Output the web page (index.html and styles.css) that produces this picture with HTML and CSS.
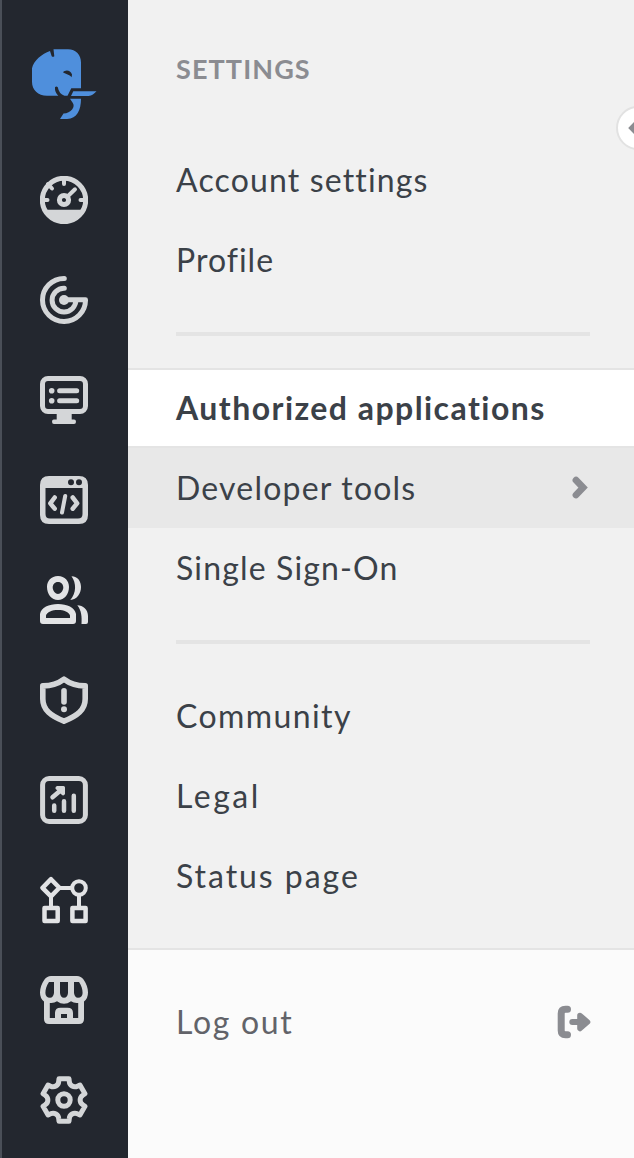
FILE: index.html
```html
<!DOCTYPE html>
<html lang="en">
<head>
<meta charset="utf-8">
<title>Settings</title>
<link rel="stylesheet" href="styles.css">
</head>
<body>
<div class="app">
  <nav class="rail">
    <svg class="logo" viewBox="0 0 68 72">
      <path fill="#4f8fdc" fill-rule="evenodd" d="M23.5 1.3H38C46 1.3 51 7 51 14.5V40.3H41.3L37.5 47.7H34.5Q29 46 27.8 39.2Q26.3 37.8 25 39.2Q24.6 44 28.3 47.7H17C8 47.7 2 42 2 33.7V20.3C3.5 13 12 5.500 20 3L21.700 8.300Q23 9.300 24.300 8.300ZM33 24.300C35 21.500 40.500 21.500 42 26.500L41.600 29.300C39.500 26.500 36 26.500 33 24.300ZM43.300 43.300H66.500C64 46 62 47.700 58.500 48H41ZM40 50.700H51C51 62 47 71 37 70.900H30L33.500 65.600C41 65 46 59 42.500 54.500Z"/>
    </svg>
    <svg class="icon" viewBox="0 0 48 48">
      <circle cx="24" cy="24" r="21.700" class="s5"/>
      <path class="f" d="M2.500 33.700H45.500C41 43 33 47 24 47S7 43 2.500 33.700Z"/>
      <path class="s4" d="M24 2V8M2 24H7.500M46 24H40.500M8 8L12 12.500M27 21L35 13.300"/>
      <circle cx="24" cy="24" r="4.600" class="s5"/>
    </svg>
    <svg class="icon" viewBox="0 0 48 48">
      <path class="s5" d="M24.300 2.500H24A21.500 21.500 0 1 0 45.500 23.700H24M24.300 12.200H24A11.900 11.900 0 1 0 35.900 24"/>
      <circle cx="24" cy="24" r="5" class="f"/>
    </svg>
    <svg class="icon" viewBox="0 0 48 48">
      <rect x="2.500" y="2.500" width="43" height="33" rx="5.500" class="s5"/>
      <path class="f" d="M16.700 37H31.700V43.500H34Q36 43.500 36 45.700T34 48H14Q12 48 12 45.700T14 43.500H16.700Z"/>
      <circle cx="11.700" cy="14.700" r="2.800" class="f"/><circle cx="11.700" cy="24.700" r="2.800" class="f"/>
      <path class="s5" d="M19.600 14.700H36.700M19.600 24.700H36.700"/>
    </svg>
    <svg class="icon" viewBox="0 0 48 48">
      <path class="f" fill-rule="evenodd" d="M9 0H39Q48 0 48 9V39Q48 48 39 48H9Q0 48 0 39V9Q0 0 9 0ZM5.500 12V38Q5.500 42.600 10 42.600H38Q42.500 42.600 42.500 38V12ZM28 6.300a3 3 0 1 0 6 0a3 3 0 1 0-6 0ZM36 6.300a3 3 0 1 0 6 0a3 3 0 1 0-6 0Z"/>
      <path class="s45" d="M14.700 21.500L10.300 27.300L14.700 32.700M32.700 21.500L37.200 27.300L32.700 32.700"/>
      <path class="s4" d="M25.200 20L22 36.500"/>
    </svg>
    <svg class="icon bright" viewBox="0 0 48 48">
      <path class="f" fill-rule="evenodd" d="M18 0C25 0 29 5 29 11C29 18 24.500 24 18 24S7 18 7 11C7 5 11 0 18 0ZM18 6C14.500 6 12.700 8.500 12.700 11.500C12.700 14.500 15.500 18 18 18S23.300 14.500 23.300 11.500C23.300 8.500 21.500 6 18 6ZM0 38C1 31.500 9 28 18 28S35 31.500 36 38V45Q36 48 33 48H3Q0 48 0 45ZM6 42H30V39.500C29 36 24 34 18 34S7 36 6 39.500Z"/>
      <path class="f" d="M31.500 .2C38 .2 41 5.500 41 11C41 17.500 37 23.500 30.300 24C36.500 17 36.500 7 31.500 .2ZM37.300 29.300C43 29.500 48 33.500 48 40V46Q48 48 46 48H41.500C42 41 41.500 34.500 37.300 29.300Z"/>
    </svg>
    <svg class="icon" viewBox="0 0 48 48">
      <path class="s5 thick" d="M24 3.200C19 7 11 9.700 2.800 9.900V23C2.800 34 11 40 24 45.200C37 40 45.200 34 45.200 23V9.900C37 9.700 29 7 24 3.200Z"/>
      <path class="s5 thick" d="M24 14.700V26"/><circle cx="24" cy="33.300" r="3" class="f"/>
    </svg>
    <svg class="icon" viewBox="0 0 48 48">
      <rect x="2.600" y="2.600" width="42.800" height="42.800" rx="6.500" class="s5"/>
      <path class="s45" d="M14.200 29.500V34.700M24 25.300V34.700M33.800 19.700V34.700M12.500 21.300L20.500 14.500"/>
      <path class="f" d="M17 10H23.500Q25 10 25 11.500V18Q23.500 20.500 21.500 18.500L15.500 12.800Q15 10.500 17 10Z"/>
    </svg>
    <svg class="icon bright" viewBox="0 0 48 48">
      <path class="s45" d="M11 3.200L19.400 11.800L11 20.400L2.500 11.800Z"/>
      <path class="s4" d="M20 12H31M11 21V31M39 20V31"/>
      <circle cx="39" cy="12" r="6.800" class="s4"/>
      <rect x="4.500" y="31.900" width="13.200" height="13.200" class="s45"/>
      <rect x="32.400" y="31.900" width="13.200" height="13.200" class="s45"/>
    </svg>
    <svg class="icon" viewBox="0 0 48 48">
      <path class="f" fill-rule="evenodd" d="M11 0H37Q41 0 43.500 3.500C46.500 8 48 12 48 16.500Q48 22.500 44 25.500V43Q44 48 39 48H9Q4 48 4 43V25.500Q0 22.500 0 16.500C0 12 1.500 8 4.500 3.500Q7 0 11 0ZM9 6C6.500 10 5.400 13 5.400 17Q5.600 21.800 10 21.800Q13.300 21.500 14 17V6ZM20 6V17Q20.500 21.800 24 21.800T28 17V6ZM34 6V17Q34.700 21.500 38 21.800Q42.400 21.800 42.600 17C42.600 13 41.500 10 39 6ZM9.800 27V42H15V37Q15 31.700 20.500 31.700H27.500Q33 31.700 33 37V42H38.200V27Q34 27.500 31 25.300Q27.500 27.800 24 27.800T17 25.300Q14 27.500 9.800 27ZM21 38V42H27V38Z"/>
    </svg>
    <svg class="icon" viewBox="0 0 48 48">
      <path class="s5" d="M18.700 5.500L19 2.700H29L29.300 5.500A5.600 5.600 0 0 0 37.400 10.200L39.950 9L44.950 17.700L42.700 19.300A5.600 5.600 0 0 0 42.700 28.700L44.950 30.300L39.950 39L37.400 37.800A5.600 5.600 0 0 0 29.300 42.500L29 45.300H19L18.700 42.500A5.600 5.600 0 0 0 10.600 37.800L8.050 39L3.050 30.300L5.300 28.700A5.600 5.600 0 0 0 5.300 19.300L3.050 17.700L8.050 9L10.600 10.200A5.600 5.600 0 0 0 18.700 5.500Z"/>
      <circle cx="24" cy="24" r="6.200" class="s5"/>
    </svg>
  </nav>
  <main class="panel">
    <h1 class="title"><span class="t-settings">SETTINGS</span></h1>
    <div class="item"><span class="t-account">Account settings</span></div>
    <div class="item"><span class="t-profile">Profile</span></div>
    <hr class="rule">
    <div class="item active"><span class="t-auth">Authorized applications</span></div>
    <div class="item hover"><span class="t-dev">Developer tools</span>
      <svg class="chevron" viewBox="0 0 16 24"><path d="M4 4.200L11.100 11.600L4 19"/></svg>
    </div>
    <div class="item"><span class="t-sso">Single Sign-On</span></div>
    <hr class="rule">
    <div class="item"><span class="t-community">Community</span></div>
    <div class="item"><span class="t-legal">Legal</span></div>
    <div class="item"><span class="t-status">Status page</span></div>
    <footer class="footer">
      <div class="item"><span class="t-logout">Log out</span>
        <svg class="exit" viewBox="0 0 34 34"><path class="bracket" d="M10.500 4.200H8.500Q4.200 4.200 4.200 8.500V25.500Q4.200 29.700 8.500 29.700H10.500"/><path class="shaft" d="M15.300 17H25"/><path class="head" d="M23 10.500L30.500 17L23 23.500Z"/></svg>
      </div>
    </footer>
    <div class="collapse"><svg viewBox="0 0 16 24"><path d="M12 4.600L4.900 12L12 19.400"/></svg></div>
  </main>
</div>
</body>
</html>
```
FILE: styles.css
```css
* { box-sizing: border-box; }
body { margin: 0; font-family: Lato, "Open Sans", sans-serif; }
.app { display: flex; width: 634px; height: 1158px; overflow: hidden; }
.rail {
  width: 128px; flex: none; background: #23272f; border-left: 2px solid #4a4f58;
  display: flex; flex-direction: column; align-items: center; padding: 48px 2px 0 0;
}
.logo { width: 68px; height: 72px; margin-bottom: 56px; flex: none; }
.icon { width: 48px; height: 48px; margin-bottom: 52px; flex: none; color: #d4d6d8; }
.bright { color: #e2e3e5; }
.f { fill: currentColor; }
.s4, .s45, .s5 { fill: none; stroke: currentColor; stroke-linecap: round; stroke-linejoin: round; }
.s4 { stroke-width: 4; }
.s45 { stroke-width: 4.5; }
.s5 { stroke-width: 5; }
.thick { stroke-width: 5.6; }
.panel { position: relative; flex: 1; min-width: 0; background: #f1f1f1; display: flex; flex-direction: column; }
.title {
  margin: 0; height: 140px; padding: 49px 48px 0; font-size: 27px; line-height: 40px;
  font-weight: 700; color: #8b8c91; white-space: nowrap;
}
.item {
  height: 80px; flex: none; padding: 0 44px 0 48px; display: flex; align-items: center; justify-content: space-between;
  font-size: 32px; line-height: 40px; color: #3b4148; white-space: nowrap;
}
.active { background: #fff; border: solid #e4e4e4; border-width: 2px 0; font-weight: 700; }
.hover { background: #e8e8e8; }
.rule { flex: none; width: 414px; height: 4px; margin: 32px 0 32px 48px; border: 0; background: #e4e4e4; }
.footer { flex: 1; margin-top: 32px; padding-top: 32px; background: #fbfbfb; border-top: 2px solid #e4e4e4; }
.footer .item { color: #626369; }
.chevron { width: 16px; height: 24px; margin: 0 2px 0 0; }
.chevron path, .collapse path { fill: none; stroke: #8b8c91; stroke-width: 6.8; stroke-linecap: round; }
.exit { width: 34px; height: 34px; margin: 0 -1px 0 0; }
.exit path { stroke: #8b8c91; stroke-linecap: round; stroke-linejoin: round; fill: none; }
.exit .bracket { stroke-width: 7; }
.exit .shaft { stroke-width: 6; }
.exit .head { stroke-width: 5.6; fill: #8b8c91; }
.collapse {
  position: absolute; left: 488px; top: 106px; width: 44px; height: 44px; border-radius: 50%;
  background: #fff; border: 2px solid #e2e2e2; display: flex; align-items: center; padding-left: 10px;
}
.collapse svg { width: 16px; height: 24px; flex: none; }
.t-settings { letter-spacing: 1.1px; }
.t-account { letter-spacing: 1.15px; }
.t-profile { letter-spacing: 1px; }
.t-auth { letter-spacing: 1.45px; }
.t-dev { letter-spacing: 1.2px; }
.t-sso { letter-spacing: 1.15px; }
.t-community { letter-spacing: 1.4px; }
.t-legal { letter-spacing: 2.5px; }
.t-status { letter-spacing: 1.95px; }
.t-logout { letter-spacing: 1.7px; }
```
